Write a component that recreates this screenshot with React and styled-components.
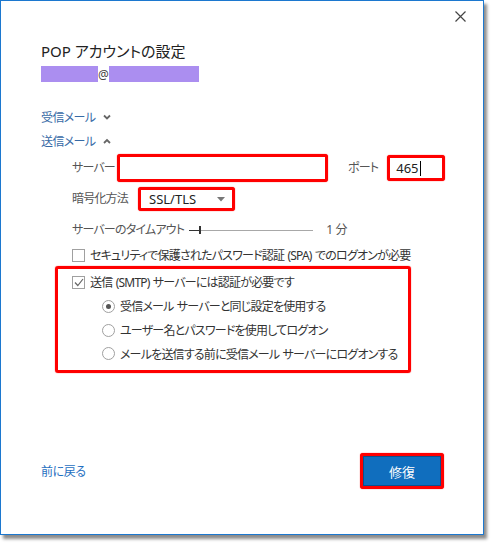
import React from 'react';
import styled, { createGlobalStyle } from 'styled-components';

const Global = createGlobalStyle`
  html, body { margin: 0; padding: 0; background: #fff; }
  body {
    font-family: "Noto Sans", "Noto Sans CJK JP", sans-serif;
    font-feature-settings: "palt";
  }
  * { box-sizing: border-box; }
`;

const Page = styled.div`
  width: 492px;
  height: 543px;
`;

const Window = styled.div`
  width: 484px;
  height: 535px;
  border: 1px solid #1c78cf;
  background: #fff;
  box-shadow: 3px 4px 3px rgba(0, 0, 0, 0.45);
  display: flex;
  flex-direction: column;
`;

const TopBar = styled.div`
  height: 30px;
  display: flex;
  justify-content: flex-end;
  align-items: center;
  padding-right: 8px;
`;

const CloseButton = styled.button`
  width: 30px;
  height: 30px;
  border: none;
  background: none;
  padding: 0;
  display: flex;
  align-items: center;
  justify-content: center;
`;

const Content = styled.div`
  flex: 1;
  display: flex;
  flex-direction: column;
  padding: 0 39px 45px 40px;
  white-space: nowrap;
`;

const Title = styled.h1`
  margin: 9px 0 0;
  font-size: 15px;
  font-weight: normal;
  line-height: 22px;
  color: #222;
`;

const Email = styled.div`
  margin-top: 4px;
  height: 16px;
  display: flex;
  align-items: center;
  font-size: 12px;
  color: #444;
`;

const Masked = styled.span`
  display: block;
  width: ${p => p.w}px;
  height: 16px;
  background: #ab8ef0;
`;

const Section = styled.div`
  margin-top: ${p => p.top}px;
  height: 20px;
  display: flex;
  align-items: center;
  gap: 7px;
  font-size: 12px;
  letter-spacing: -0.6px;
  color: #376aa6;
`;

const Row = styled.div`
  margin-top: ${p => p.top}px;
  margin-left: 31px;
  display: flex;
  align-items: center;
  gap: ${p => p.gap ?? 6}px;
  font-size: 12px;
  letter-spacing: -0.8px;
  word-spacing: 1px;
  color: #555;
`;

const Label = styled.span`
  flex-shrink: 0;
  line-height: 20px;
  color: #555;
  margin-left: ${p => p.ml || 0}px;
`;

const Marked = styled.div`
  flex-shrink: 0;
  margin-left: ${p => p.ml || 0}px;
  border: 3px solid #ff0000;
  border-radius: 3px;
  box-shadow: 0 0 1px #ff0000;
  background: #fff;
  width: ${p => p.w}px;
  height: ${p => p.h}px;
  display: flex;
  align-items: center;
  padding: 0 6px;
  font-size: 13px;
  letter-spacing: 0;
  color: #222;
`;

const Caret = styled.span`
  display: inline-block;
  width: 1px;
  height: 15px;
  background: #000;
  margin-left: 1px;
`;

const Select = styled(Marked)`
  justify-content: space-between;
  padding: 0 7px 0 8px;
`;

const Slider = styled.div`
  flex-shrink: 0;
  width: 124px;
  height: 10px;
  margin-left: 5px;
  margin-right: 13px;
  position: relative;
  display: flex;
  align-items: center;
`;

const Track = styled.div`
  flex: 1;
  height: 1px;
  background: linear-gradient(to right, #333 0 11px, #a8a8a8 11px);
`;

const Thumb = styled.span`
  position: absolute;
  left: 10px;
  top: 1px;
  width: 2px;
  height: 8px;
  background: #333;
`;

const CheckRow = styled.label`
  margin-top: ${p => p.top || 0}px;
  margin-left: ${p => p.indent}px;
  height: ${p => p.h || 20}px;
  display: flex;
  align-items: center;
  gap: 5px;
  font-size: 12px;
  letter-spacing: -0.8px;
  word-spacing: 1px;
  color: #333;
`;

const Box = styled.span`
  flex-shrink: 0;
  width: 13px;
  height: 13px;
  border: 1px solid #a0a0a0;
  background: #fff;
  display: flex;
  align-items: center;
  justify-content: center;
`;

const Radio = styled.span`
  flex-shrink: 0;
  width: 13px;
  height: 13px;
  border: 1px solid #a0a0a0;
  border-radius: 50%;
  background: #fff;
  display: flex;
  align-items: center;
  justify-content: center;
  &::after {
    content: '';
    width: 5px;
    height: 5px;
    border-radius: 50%;
    background: ${p => (p.on ? '#555' : 'transparent')};
  }
`;

const AuthBox = styled.div`
  margin-top: 1px;
  margin-left: 14px;
  width: 356px;
  height: 107px;
  border: 3px solid #ff0000;
  border-radius: 3px;
  box-shadow: 0 0 1px #ff0000;
  padding: 3px 0 0;
  display: flex;
  flex-direction: column;
`;

const Footer = styled.div`
  margin-top: auto;
  display: flex;
  justify-content: space-between;
  align-items: center;
`;

const Back = styled.a`
  font-size: 12px;
  letter-spacing: -0.4px;
  color: #1f70c1;
  text-decoration: none;
`;

const Repair = styled.button`
  width: 84px;
  height: 36px;
  border: 3px solid #ff0000;
  border-radius: 3px;
  box-shadow: 0 0 1px #ff0000, inset 0 0 0 1px #0d4f8d;
  background: #106ebe;
  color: #fff;
  font-family: inherit;
  font-size: 13px;
  font-weight: 400;
  padding: 0;
`;

function Chevron({ up }) {
  return (
    <svg width="8" height="6" viewBox="0 0 8 6">
      <path
        d={up ? 'M1 5 L4 2 L7 5' : 'M1 1.5 L4 4.5 L7 1.5'}
        fill="none"
        stroke="#666"
        strokeWidth="1.8"
      />
    </svg>
  );
}

export default function App() {
  return (
    <Page>
      <Global />
      <Window>
        <TopBar>
          <CloseButton aria-label="閉じる">
            <svg width="11" height="11" viewBox="0 0 11 11">
              <path d="M0.5 0.5 L10.5 10.5 M10.5 0.5 L0.5 10.5" stroke="#444" strokeWidth="1.2" />
            </svg>
          </CloseButton>
        </TopBar>
        <Content>
          <Title>POP アカウントの設定</Title>
          <Email>
            <Masked w={57} />
            <span>@</span>
            <Masked w={90} />
          </Email>

          <Section top={25}>
            受信メール <Chevron />
          </Section>
          <Section top={4}>
            送信メール <Chevron up />
          </Section>

          <Row top={3} gap={2}>
            <Label>サーバー</Label>
            <Marked w={211} h={28} />
            <Label ml={18}>ポート</Label>
            <Marked w={58} h={26} ml={7}>
              465<Caret />
            </Marked>
          </Row>

          <Row top={5} gap={10}>
            <Label>暗号化方法</Label>
            <Select w={97} h={24}>
              SSL/TLS
              <svg width="8" height="5" viewBox="0 0 8 5">
                <path d="M0 0 H8 L4 4.5 Z" fill="#777" />
              </svg>
            </Select>
          </Row>

          <Row top={9} gap={0}>
            <Label>サーバーのタイムアウト</Label>
            <Slider>
              <Track />
              <Thumb />
            </Slider>
            <Label>1 分</Label>
          </Row>

          <CheckRow top={5} indent={31}>
            <Box />
            セキュリティで保護されたパスワード認証 (SPA) でのログオンが必要
          </CheckRow>

          <AuthBox>
            <CheckRow indent={14}>
              <Box>
                <svg width="10" height="9" viewBox="0 0 10 9">
                  <path d="M1 4.5 L3.8 7.5 L9 1" fill="none" stroke="#666" strokeWidth="1.2" />
                </svg>
              </Box>
              送信 (SMTP) サーバーには認証が必要です
            </CheckRow>
            <CheckRow indent={44} h={24} top={2}>
              <Radio on />
              受信メール サーバーと同じ設定を使用する
            </CheckRow>
            <CheckRow indent={44} h={24}>
              <Radio />
              ユーザー名とパスワードを使用してログオン
            </CheckRow>
            <CheckRow indent={44} h={23}>
              <Radio />
              メールを送信する前に受信メール サーバーにログオンする
            </CheckRow>
          </AuthBox>

          <Footer>
            <Back href="#">前に戻る</Back>
            <Repair>修復</Repair>
          </Footer>
        </Content>
      </Window>
    </Page>
  );
}
